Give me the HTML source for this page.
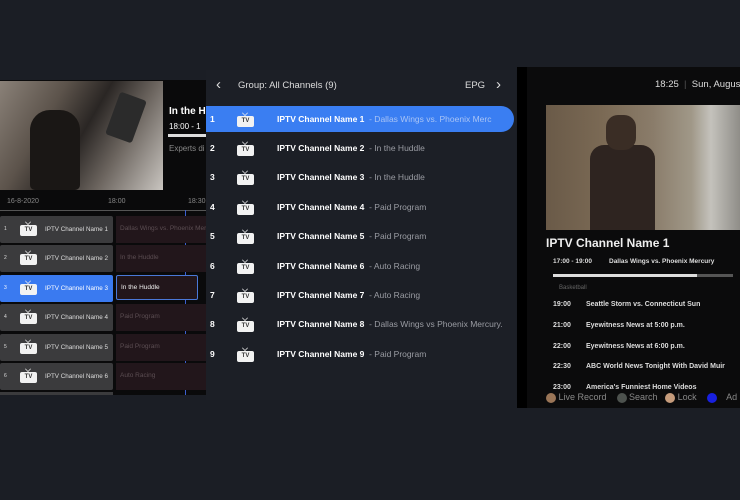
<!DOCTYPE html>
<html><head><meta charset="utf-8"><style>
*{margin:0;padding:0;box-sizing:border-box}
body{width:740px;height:500px;background:#1b1e25;font-family:"Liberation Sans",sans-serif;position:relative;overflow:hidden;color:#fff}
.abs{position:absolute}
.tv{position:absolute;width:17px;height:11px;background:#f2f2f2;border-radius:2px;font-size:6px;color:#333;text-align:center;line-height:11px;font-weight:bold}
.tv:before{content:"";position:absolute;left:5px;top:-6px;width:5px;height:5px;border-right:1.5px solid #eee;border-bottom:1.5px solid #eee;transform:rotate(45deg) scale(.7)}
.crow{position:absolute;left:0;width:113px;height:27px;background:#3b3b3d;border-radius:2px;font-size:6.3px;color:#ddd;white-space:nowrap}
.prog{position:absolute;left:116px;width:91px;height:27px;background:#22161b;font-size:6.5px;color:#5b4d52;padding:9px 4px;white-space:nowrap;overflow:hidden}
.mrow{position:absolute;left:206px;width:308px;height:26px;font-size:8.5px}
.mrow .n{position:absolute;left:4px;top:8px;font-weight:bold}
.mrow .t{position:absolute;left:71px;top:8px;font-weight:bold;white-space:nowrap}
.mrow .t span{font-weight:normal;color:#9a9ca3}
.ep{position:absolute;left:553px;font-size:7px;font-weight:bold;color:#ddd;white-space:nowrap}
.ep b{display:inline-block;width:33px}
</style></head><body>
<!-- left panel -->
<div class="abs" style="left:0;top:80px;width:207px;height:315px;background:#0a0a0b"></div>
<div class="abs" style="left:0;top:81px;width:163px;height:109px;background:linear-gradient(120deg,#8a8178 0%,#5c534b 30%,#2a2624 50%,#6b645e 70%,#c9c5c0 100%)"></div>
<div class="abs" style="left:30px;top:110px;width:50px;height:80px;background:#1a1715;border-radius:20px 20px 5px 5px"></div>
<div class="abs" style="left:112px;top:95px;width:28px;height:45px;background:#2b2b2b;border-radius:3px;transform:rotate(20deg)"></div>
<div class="abs" style="left:169px;top:106px;font-size:10px;font-weight:bold">In the Hu</div>
<div class="abs" style="left:169px;top:122px;font-size:8px">18:00 - 1</div>
<div class="abs" style="left:168px;top:134px;width:40px;height:3px;background:#ddd"></div>
<div class="abs" style="left:169px;top:144px;font-size:8px;color:#888">Experts di</div>
<div class="abs" style="left:7px;top:198px;font-size:7px;color:#888">16-8-2020</div>
<div class="abs" style="left:108px;top:198px;font-size:7px;color:#888">18:00</div>
<div class="abs" style="left:188px;top:198px;font-size:7px;color:#888">18:30</div>
<div class="abs" style="left:0;top:210px;width:207px;height:1px;background:#555"></div>
<div class="abs" style="left:185px;top:210px;width:1px;height:185px;background:#3c5fd0"></div>

<div class="crow" style="top:216px"><span class="abs" style="left:4px;top:10px;font-size:5px">1</span><div class="tv" style="left:20px;top:9px">TV</div><span class="abs" style="left:45px;top:10px">IPTV Channel Name 1</span></div>
<div class="prog" style="top:216px">Dallas Wings vs. Phoenix Merc</div>
<div class="crow" style="top:245px"><span class="abs" style="left:4px;top:10px;font-size:5px">2</span><div class="tv" style="left:20px;top:9px">TV</div><span class="abs" style="left:45px;top:10px">IPTV Channel Name 2</span></div>
<div class="prog" style="top:245px">In the Huddle</div>
<div class="crow" style="top:275px;background:#3a7af0;color:#fff"><span class="abs" style="left:4px;top:10px;font-size:5px">3</span><div class="tv" style="left:20px;top:9px">TV</div><span class="abs" style="left:45px;top:10px">IPTV Channel Name 3</span></div>
<div class="prog" style="top:275px;left:116px;width:82px;height:25px;border:1px solid #4a78d8;border-radius:2px;color:#eee;padding:8px 4px">In the Huddle</div>
<div class="crow" style="top:304px"><span class="abs" style="left:4px;top:10px;font-size:5px">4</span><div class="tv" style="left:20px;top:9px">TV</div><span class="abs" style="left:45px;top:10px">IPTV Channel Name 4</span></div>
<div class="prog" style="top:304px">Paid Program</div>
<div class="crow" style="top:334px"><span class="abs" style="left:4px;top:10px;font-size:5px">5</span><div class="tv" style="left:20px;top:9px">TV</div><span class="abs" style="left:45px;top:10px">IPTV Channel Name 5</span></div>
<div class="prog" style="top:334px">Paid Program</div>
<div class="crow" style="top:363px"><span class="abs" style="left:4px;top:10px;font-size:5px">6</span><div class="tv" style="left:20px;top:9px">TV</div><span class="abs" style="left:45px;top:10px">IPTV Channel Name 6</span></div>
<div class="prog" style="top:363px">Auto Racing</div>
<div class="abs" style="left:0;top:392px;width:113px;height:3px;background:#3b3b3d"></div>

<!-- middle panel -->
<div class="abs" style="left:206px;top:70px;width:310px;height:330px;background:#1c1f26"></div>
<div class="abs" style="left:216px;top:76px;font-size:15px;color:#ddd">&#x2039;</div>
<div class="abs" style="left:238px;top:80px;font-size:9.5px;color:#ddd">Group: All Channels (9)</div>
<div class="abs" style="left:465px;top:80px;font-size:9.5px;color:#ddd">EPG</div>
<div class="abs" style="left:496px;top:76px;font-size:15px;color:#ddd">&#x203A;</div>
<div class="mrow" style="top:106px;background:#3a7ef2;border-radius:0 13px 13px 0"><span class="n">1</span><div class="tv" style="left:31px;top:10px">TV</div><span class="t">IPTV Channel Name 1 <span style="color:#a9c4f5">&nbsp;- Dallas Wings vs. Phoenix Merc</span></span></div>
<div class="mrow" style="top:135px"><span class="n">2</span><div class="tv" style="left:31px;top:10px">TV</div><span class="t">IPTV Channel Name 2 <span>&nbsp;- In the Huddle</span></span></div>
<div class="mrow" style="top:164px"><span class="n">3</span><div class="tv" style="left:31px;top:10px">TV</div><span class="t">IPTV Channel Name 3 <span>&nbsp;- In the Huddle</span></span></div>
<div class="mrow" style="top:194px"><span class="n">4</span><div class="tv" style="left:31px;top:10px">TV</div><span class="t">IPTV Channel Name 4 <span>&nbsp;- Paid Program</span></span></div>
<div class="mrow" style="top:223px"><span class="n">5</span><div class="tv" style="left:31px;top:10px">TV</div><span class="t">IPTV Channel Name 5 <span>&nbsp;- Paid Program</span></span></div>
<div class="mrow" style="top:253px"><span class="n">6</span><div class="tv" style="left:31px;top:10px">TV</div><span class="t">IPTV Channel Name 6 <span>&nbsp;- Auto Racing</span></span></div>
<div class="mrow" style="top:282px"><span class="n">7</span><div class="tv" style="left:31px;top:10px">TV</div><span class="t">IPTV Channel Name 7 <span>&nbsp;- Auto Racing</span></span></div>
<div class="mrow" style="top:311px"><span class="n">8</span><div class="tv" style="left:31px;top:10px">TV</div><span class="t">IPTV Channel Name 8 <span>&nbsp;- Dallas Wings vs Phoenix Mercury.</span></span></div>
<div class="mrow" style="top:341px"><span class="n">9</span><div class="tv" style="left:31px;top:10px">TV</div><span class="t">IPTV Channel Name 9 <span>&nbsp;- Paid Program</span></span></div>

<!-- right panel -->
<div class="abs" style="left:517px;top:67px;width:223px;height:341px;background:#0b0b0c"></div>
<div class="abs" style="left:517px;top:67px;width:10px;height:341px;background:#000"></div>
<div class="abs" style="left:655px;top:79px;font-size:9.5px;color:#ddd;white-space:nowrap">18:25 <span style="color:#555">&nbsp;|&nbsp;</span> Sun, August</div>
<div class="abs" style="left:546px;top:105px;width:194px;height:125px;background:linear-gradient(90deg,#6a5a48 0%,#7b6a55 30%,#8a7c6a 55%,#a09888 75%,#c4c2bc 85%,#8f8d88 100%)"></div>
<div class="abs" style="left:590px;top:145px;width:65px;height:85px;background:#2e2420;border-radius:14px 14px 0 0"></div>
<div class="abs" style="left:606px;top:115px;width:30px;height:35px;background:#3a2d25;border-radius:12px"></div>
<div class="abs" style="left:546px;top:236px;font-size:12px;font-weight:bold;color:#eee">IPTV Channel Name 1</div>
<div class="ep" style="top:258px;font-size:6.5px"><b style="width:56px">17:00 - 19:00</b>Dallas Wings vs. Phoenix Mercury</div>
<div class="abs" style="left:553px;top:274px;width:180px;height:3px;background:#555"></div>
<div class="abs" style="left:553px;top:274px;width:144px;height:3px;background:#ddd"></div>
<div class="abs" style="left:559px;top:285px;font-size:6px;color:#666">Basketball</div>
<div class="ep" style="top:301px"><b>19:00</b>Seattle Storm vs. Connecticut Sun</div>
<div class="ep" style="top:322px"><b>21:00</b>Eyewitness News at 5:00 p.m.</div>
<div class="ep" style="top:343px"><b>22:00</b>Eyewitness News at 6:00 p.m.</div>
<div class="ep" style="top:363px"><b>22:30</b>ABC World News Tonight With David Muir</div>
<div class="ep" style="top:384px"><b>23:00</b>America's Funniest Home Videos</div>
<div class="abs" style="left:546px;top:392px;font-size:9px;color:#888;white-space:nowrap;line-height:10px">
<span style="display:inline-block;width:10px;height:10px;border-radius:5px;background:#9a7557;vertical-align:middle"></span> Live Record &nbsp;&nbsp;
<span style="display:inline-block;width:10px;height:10px;border-radius:5px;background:#4d524e;vertical-align:middle"></span> Search &nbsp;
<span style="display:inline-block;width:10px;height:10px;border-radius:5px;background:#c59b7b;vertical-align:middle"></span> Lock &nbsp;&nbsp;
<span style="display:inline-block;width:10px;height:10px;border-radius:5px;background:#1820e0;vertical-align:middle"></span> &nbsp;&nbsp; Ad</div>
</body></html>
